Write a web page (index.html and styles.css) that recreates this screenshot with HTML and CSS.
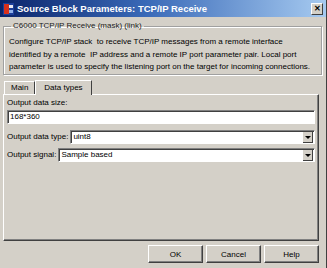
FILE: index.html
```html
<!DOCTYPE html>
<html lang="en">
<head>
    <meta charset="UTF-8">
    <title>Source Block Parameters: TCP/IP Receive</title>
    <link rel="stylesheet" href="styles.css">
</head>
<body>

<div class="window">
    <div class="titlebar">
        <svg class="app-icon" width="11" height="12" viewBox="0 0 11 12">
            <rect x="0" y="0" width="11" height="12" fill="#1c3f9a"/>
            <rect x="1" y="1" width="5" height="10" fill="#d8301c"/>
            <rect x="6" y="2" width="4" height="3" fill="#e8e8f0"/>
            <rect x="6" y="7" width="4" height="3" fill="#8fb0e8"/>
        </svg>
        <span class="title">Source Block Parameters: TCP/IP Receive</span>
        <div class="close">&#x2715;</div>
    </div>

    <div class="content">
        <fieldset class="group">
            <legend>C6000 TCP/IP Receive (mask) (link)</legend>
            <p>Configure TCP/IP stack &nbsp;to receive TCP/IP messages from a remote interface<br>
            identified by a remote &nbsp;IP address and a remote IP port parameter pair. Local port<br>
            parameter is used to specify the listening port on the target for incoming connections.</p>
        </fieldset>

        <div class="tabs">
            <div class="tab">Main</div>
            <div class="tab active">Data types</div>
        </div>

        <div class="panel">
            <div class="label">Output data size:</div>
            <div class="edit">168*360</div>

            <div class="row">
                <span class="label">Output data type:</span>
                <div class="combo"><span class="value">uint8</span><span class="arrow"></span></div>
            </div>
            <div class="row second">
                <span class="label">Output signal:</span>
                <div class="combo"><span class="value">Sample based</span><span class="arrow"></span></div>
            </div>
        </div>

        <div class="buttons">
            <button>OK</button>
            <button>Cancel</button>
            <button>Help</button>
        </div>
    </div>
</div>

</body>
</html>
```

FILE: styles.css
```css
body {
    margin: 0;
    padding: 0;
    font-family: "Liberation Sans", Arial, sans-serif;
    font-size: 8px;
    color: #000;
    background-color: #d4d0c8;
}
.window {
    width: 327px;
    height: 268px;
    background-color: #d4d0c8;
    border-right: 1px solid #404040;
    box-sizing: border-box;
    overflow: hidden;
}
.titlebar {
    height: 17px;
    display: flex;
    align-items: center;
    padding: 0 3px 0 3px;
    background: linear-gradient(to right, #0a246a, #3a6ab8 45%, #a6caf0);
}
.app-icon {
    flex: none;
    margin-right: 3px;
}
.title {
    flex: 1;
    color: #fff;
    font-weight: bold;
    font-size: 9.5px;
    white-space: nowrap;
}
.close {
    width: 10px;
    height: 10px;
    margin-top: 1px;
    background-color: #d4d0c8;
    border: 1px solid;
    border-color: #fff #404040 #404040 #fff;
    font-size: 8px;
    font-weight: bold;
    line-height: 10px;
    text-align: center;
}
.content {
    padding: 4px 4px 0 3px;
}
.group {
    margin: 0;
    padding: 5px 3px 4px 5px;
    height: 43px;
    border: 1px solid #a0a0a0;
    box-shadow: 1px 1px 0 #fff, inset 1px 1px 0 #fff;
}
.group legend {
    padding: 0 2px;
    margin-left: 2px;
    line-height: 10px;
    color: #202020;
}
.group p {
    margin: 0;
    line-height: 12.5px;
    white-space: nowrap;
}
.tabs {
    display: flex;
    align-items: flex-end;
    margin-top: 3px;
    padding-left: 1px;
    height: 16px;
}
.tab {
    height: 12px;
    line-height: 12px;
    padding: 0 6px;
    border: 1px solid;
    border-color: #fff #404040 transparent #fff;
    border-bottom: none;
}
.tab.active {
    height: 14px;
    line-height: 14px;
    padding: 0 8px;
    background-color: #d4d0c8;
    position: relative;
    top: 1px;
}
.panel {
    height: 143px;
    margin-right: 3px;
    padding: 2px 3px 0 3px;
    border: 1px solid;
    border-color: #fff #404040 #404040 #fff;
    box-shadow: inset -1px -1px 0 #808080;
}
.panel .label {
    line-height: 12px;
}
.edit {
    height: 12px;
    line-height: 12px;
    margin-top: 1px;
    padding-left: 2px;
    background-color: #fff;
    border: 1px solid;
    border-color: #808080 #fff #fff #808080;
    box-shadow: inset 1px 1px 0 #404040;
}
.row {
    display: flex;
    align-items: center;
    margin-top: 6px;
}
.row.second {
    margin-top: 4px;
}
.row .label {
    margin-right: 2px;
}
.combo {
    flex: 1;
    display: flex;
    height: 12px;
    line-height: 12px;
    background-color: #fff;
    border: 1px solid;
    border-color: #808080 #fff #fff #808080;
    box-shadow: inset 1px 1px 0 #404040;
    padding: 0 1px 0 2px;
}
.combo .value {
    flex: 1;
}
.arrow {
    width: 9px;
    height: 10px;
    margin-top: 1px;
    background-color: #d4d0c8;
    border-right: 1px solid #404040;
    border-bottom: 1px solid #404040;
    position: relative;
}
.arrow::after {
    content: "";
    position: absolute;
    left: 2px;
    top: 4px;
    border-left: 3px solid transparent;
    border-right: 3px solid transparent;
    border-top: 3px solid #000;
}
.buttons {
    display: flex;
    justify-content: flex-end;
    gap: 3px;
    margin-top: 4px;
    margin-right: 3px;
}
button {
    width: 55px;
    height: 18px;
    padding: 0;
    font-family: inherit;
    font-size: 8px;
    color: #000;
    background-color: #d4d0c8;
    border: 1px solid;
    border-color: #fff #404040 #404040 #fff;
    box-shadow: inset -1px -1px 0 #808080;
}
```
